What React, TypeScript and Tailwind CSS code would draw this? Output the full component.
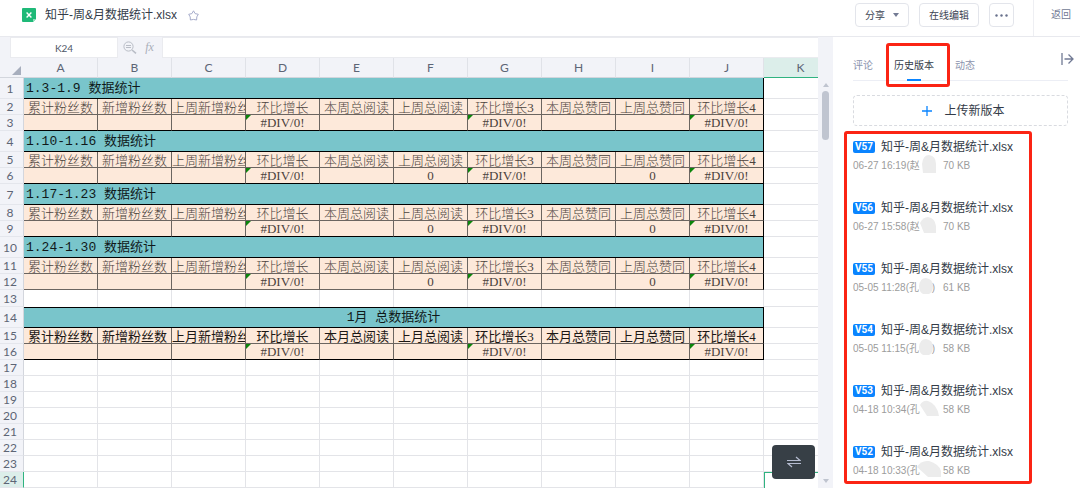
import React, { useState } from 'react'
import clsx from 'clsx'

const columns = ['A', 'B', 'C', 'D', 'E', 'F', 'G', 'H', 'I', 'J', 'K']

const weekLabels = ['累计粉丝数', '新增粉丝数', '上周新增粉丝', '环比增长', '本周总阅读', '上周总阅读', '环比增长3', '本周总赞同', '上周总赞同', '环比增长4']
const monthLabels = ['累计粉丝数', '新增粉丝数', '上月新增粉丝', '环比增长', '本月总阅读', '上月总阅读', '环比增长3', '本月总赞同', '上月总赞同', '环比增长4']
const firstValues = ['', '', '', '#DIV/0!', '', '', '#DIV/0!', '', '', '#DIV/0!']
const values = ['', '', '', '#DIV/0!', '', '0', '#DIV/0!', '', '0', '#DIV/0!']

type Row = {
  kind: 'title' | 'label' | 'value' | 'gap' | 'empty'
  title?: string
  cells?: string[]
  month?: boolean
  heavy?: boolean
}

const rows: Row[] = [
  { kind: 'title', title: '1.3-1.9 数据统计' },
  { kind: 'label', cells: weekLabels },
  { kind: 'value', cells: firstValues, heavy: true },
  { kind: 'title', title: '1.10-1.16 数据统计' },
  { kind: 'label', cells: weekLabels },
  { kind: 'value', cells: values, heavy: true },
  { kind: 'title', title: '1.17-1.23 数据统计' },
  { kind: 'label', cells: weekLabels },
  { kind: 'value', cells: values, heavy: true },
  { kind: 'title', title: '1.24-1.30 数据统计' },
  { kind: 'label', cells: weekLabels },
  { kind: 'value', cells: values },
  { kind: 'gap' },
  { kind: 'title', title: '1月 总数据统计', month: true },
  { kind: 'label', cells: monthLabels, month: true },
  { kind: 'value', cells: firstValues, month: true, heavy: true },
  ...Array.from({ length: 8 }, (): Row => ({ kind: 'empty' })),
]

const versions = [
  { id: 'V57', time: '06-27 16:19', name: '赵', size: '70 KB', blot: 'M1 10 Q2 1 8 1 Q15 2 15 10 V19 H2 Z' },
  { id: 'V56', time: '06-27 15:58', name: '赵', size: '70 KB', blot: 'M-1 8 Q2 2 7 2 Q14 3 15 11 V18 H3 Z' },
  { id: 'V55', time: '05-05 11:28', name: '孔', size: '61 KB', closed: true, blot: 'M-2 10 Q-1 2 5 2 Q12 3 12 10 Q12 16 8 18 H2 Q-2 16 -2 10 Z' },
  { id: 'V54', time: '05-05 11:15', name: '孔', size: '58 KB', closed: true, blot: 'M-2 10 Q-1 2 5 2 Q12 3 12 10 Q12 16 8 18 H2 Q-2 16 -2 10 Z' },
  { id: 'V53', time: '04-18 10:34', name: '孔', size: '58 KB', blot: 'M-1 7 Q2 2 7 3 Q16 6 18 18 H6 Z' },
  { id: 'V52', time: '04-18 10:33', name: '孔', size: '58 KB', blot: 'M-4 8 Q0 1 8 2 Q18 5 20 12 V18 H7 Z' },
]

const tabs = ['评论', '历史版本', '动态']

const sans = "font-['Liberation_Sans','Noto_Sans_CJK_SC',sans-serif]"
const lato = "font-['Lato','Noto_Sans_CJK_SC',sans-serif]"
const mono = "font-['Liberation_Mono','Noto_Sans_CJK_SC',monospace]"
const serif = "font-['Liberation_Serif','Noto_Sans_CJK_SC',serif]"

const TopBar = () => (
  <header className="flex h-[37px] shrink-0 items-start border-b border-[#e8e9ee] bg-white">
    <div className="flex h-[30px] min-w-0 flex-1 items-center pl-[22px]">
      <svg width="14" height="14" viewBox="0 0 14 14">
        <path d="M1 0h12a1 1 0 0 1 1 1v10l-3 3H1a1 1 0 0 1-1-1V1a1 1 0 0 1 1-1z" fill="#1fb978" />
        <path d="M14 11l-3 3v-3z" fill="#8fe0bd" />
        <path d="M4.600 4.600l4.800 4.800M9.400 4.600l-4.800 4.800" stroke="#fff" strokeWidth="1.4" />
      </svg>
      <h1 className="ml-[9px] truncate text-xs text-[#333b48]">知乎-周&amp;月数据统计.xlsx</h1>
      <button type="button" aria-label="收藏" className="ml-[11px]">
        <svg width="11" height="11" viewBox="0 0 11 11" fill="none" stroke="#a6accb" strokeWidth="1" strokeLinejoin="round">
          <path d="M5.5 .8L7.1 3.6 10.3 4.3 8.8 6.9 8.6 10 5.5 9.4 2.4 10 2.200 6.900 .7 4.3 3.9 3.6z" />
        </svg>
      </button>
    </div>
    <div className="flex h-[30px] items-center gap-[10px] pr-[19px] text-[10px] text-[#3b4352]">
      <button type="button" className="flex h-6 w-[54px] items-center justify-center gap-2 rounded-sm border border-[#e3e5eb]">
        分享
        <svg width="6" height="4" viewBox="0 0 6 4"><path d="M0 0h6L3 4z" fill="#737b94" /></svg>
      </button>
      <button type="button" className="h-6 w-[60px] rounded-sm border border-[#e3e5eb]">在线编辑</button>
      <button type="button" aria-label="更多" className="flex h-6 w-[25px] items-center justify-center rounded-sm border border-[#e3e5eb]">
        <svg width="13" height="3" viewBox="0 0 13 3" fill="#68718c">
          <circle cx="1.5" cy="1.5" r="1.2" />
          <circle cx="6.5" cy="1.5" r="1.2" />
          <circle cx="11.5" cy="1.5" r="1.2" />
        </svg>
      </button>
    </div>
    <a href="#" className="flex h-full w-[47px] items-center justify-end border-l border-[#eeeff3] pr-[9px] pb-2 text-[10px] text-[#717a94]">返回</a>
  </header>
)

const FormulaBar = () => (
  <div className="flex h-[21px] shrink-0 items-start">
    <input
      aria-label="名称框"
      defaultValue="K24"
      className={`${lato} ml-[10px] h-[21px] w-[108px] border border-[#eaebef] bg-white text-center text-[10px] text-[#505868] outline-none`}
    />
    <svg className="mt-1 ml-[5px]" width="14" height="13" viewBox="0 0 14 13" fill="none" stroke="#b9bdc6">
      <circle cx="5.5" cy="5.5" r="4.6" />
      <path d="M3 4.5h5M3 6.5h5" />
      <path d="M9 9l4 3.4" strokeWidth="1.6" />
    </svg>
    <span className={`${serif} w-[25px] text-center text-xs leading-5 text-[#a9aeb8] italic`}>fx</span>
    <input aria-label="公式" className="h-[21px] min-w-0 flex-1 border border-r-0 border-[#eaebef] bg-white px-2 text-xs outline-none" />
  </div>
)

const DataCell = ({ text, row, last }: { text: string, row: Row, last: boolean }) => {
  const isError = text.startsWith('#')
  return (
    <td
      className={clsx(
        'relative border-r border-b bg-[#fde9da] p-0 text-center text-[13px]',
        row.heavy ? 'border-b-black' : 'border-b-[#6b6560]',
        last ? 'border-r-black' : 'border-r-[#6b6560]',
      )}
    >
      {isError && (
        <svg className="absolute top-0 left-0" width="5" height="5" viewBox="0 0 5 5"><path d="M0 0h5L0 5z" fill="#0b850b" /></svg>
      )}
      <div
        className={clsx(
          'h-[15px] overflow-hidden whitespace-nowrap',
          row.kind === 'label' ? 'leading-[18px]' : 'leading-4',
          row.kind === 'label' && row.month ? 'font-normal text-[#1c1815]' : 'font-light text-[#4b423c]',
        )}
      >
        {text}
      </div>
    </td>
  )
}

const SheetRow = ({ row, index }: { row: Row, index: number }) => {
  const active = index === 24
  return (
    <tr className={clsx(row.kind === 'title' ? 'h-[21px]' : row.kind === 'gap' ? 'h-[17px]' : 'h-4')}>
      <th
        scope="row"
        className={clsx(
          lato,
          'border-r border-b border-b-[#e4e6ec] p-0 pr-[3px] text-center text-xs leading-[15px] font-normal text-[#5d6575]',
          active ? 'border-r-[#2fb380] bg-[#dceeea]' : 'border-r-[#d3d6dd] bg-[#f2f3f8]',
        )}
      >
        {index}
      </th>
      {row.kind === 'title' && (
        <td
          colSpan={10}
          className={clsx(
            mono,
            'border-r border-b border-black bg-[#79c5cb] p-0 px-[2px] text-[13px] font-normal text-[#10191a]',
            row.month && 'border-t text-center',
          )}
        >
          <div className={clsx('overflow-hidden', row.month ? 'h-[19px] leading-5' : 'h-5 leading-[22px]')}>{row.title}</div>
        </td>
      )}
      {row.cells && row.cells.map((text, i) => <DataCell key={i} text={text} row={row} last={i === 9} />)}
      {(row.kind === 'gap' || row.kind === 'empty') && columns.slice(0, 10).map((c) => (
        <td key={c} className={clsx('border-r border-[#e3e4e8] bg-white p-0', row.kind === 'empty' && 'border-b')}></td>
      ))}
      <td className={clsx('bg-white p-0', active ? 'border-t border-l border-[#2fb380]' : 'border-r border-b border-[#e3e4e8]')}></td>
    </tr>
  )
}

const Sheet = () => (
  <div className="relative min-h-0 flex-1 overflow-hidden">
    <table className={`${serif} w-[838px] min-w-full table-fixed border-separate border-spacing-0`}>
      <colgroup>
        <col className="w-6" />
        {columns.map((c) => <col key={c} />)}
      </colgroup>
      <thead>
        <tr className={`${lato} h-5 text-xs text-[#5d6575]`}>
          <td className="border-b border-[#d3d6dd] p-0 align-bottom">
            <svg className="mb-[2px] ml-3" width="9" height="9" viewBox="0 0 9 9"><path d="M9 0v9H0z" fill="#a7aebd" /></svg>
          </td>
          {columns.map((c) => (
            <th
              key={c}
              scope="col"
              className={clsx(
                'border-r border-b border-r-[#e0e2e8] p-0 leading-[19px] font-normal',
                c === 'K' ? 'border-b-[#2fb380] bg-[#dceeea]' : 'border-b-[#d3d6dd]',
              )}
            >
              {c}
            </th>
          ))}
        </tr>
      </thead>
      <tbody>
        {rows.map((row, i) => <SheetRow key={i} row={row} index={i + 1} />)}
      </tbody>
    </table>
    <button type="button" aria-label="切换" className="absolute right-[3px] bottom-[9px] flex h-[34px] w-[43px] items-center justify-center rounded-sm bg-[#373f46]">
      <svg width="14" height="12" viewBox="0 0 14 12" fill="none" stroke="#b5bcd0" strokeWidth="1.2">
        <path d="M0 4.5h13L9 1" />
        <path d="M14 7.5H1L5 11" />
      </svg>
    </button>
  </div>
)

const ScrollTrack = () => (
  <div className="flex w-[15px] shrink-0 flex-col items-center bg-[#f2f3f8] pt-[46px] pb-[5px]">
    <svg width="6" height="4" viewBox="0 0 6 4"><path d="M3 0l3 4H0z" fill="#bfc4cf" /></svg>
    <div className="mt-1 h-[49px] w-[7px] rounded-full bg-[#c0c5d0]"></div>
    <svg className="mt-auto" width="6" height="4" viewBox="0 0 6 4"><path d="M0 0h6L3 4z" fill="#bfc4cf" /></svg>
  </div>
)

const HistoryPanel = () => {
  const [current, setCurrent] = useState('历史版本')

  return (
    <aside className="flex w-[247px] shrink-0 flex-col bg-white">
      <div className="relative mr-3 ml-5 flex h-11 shrink-0 items-end gap-[21px] border-b border-[#eceef5]">
        {tabs.map((tab) => (
          <button
            key={tab}
            type="button"
            onClick={() => setCurrent(tab)}
            className={clsx('relative h-[30px] text-[10px]', current === tab ? 'text-[#333b48]' : 'text-[#8b93ad]')}
          >
            {tab}
            {current === tab && (
              <>
                <span className="absolute -bottom-px left-1/2 h-[2px] w-[14px] -translate-x-1/2 bg-[#0a84ff]"></span>
                <span className="absolute -top-[7px] -right-4 -bottom-[7px] -left-2 rounded-[3px] border-[3px] border-[#fb2414]"></span>
              </>
            )}
          </button>
        ))}
        <button type="button" aria-label="收起" className="absolute top-4 -right-[6px]">
          <svg width="13" height="12" viewBox="0 0 13 12" fill="none" stroke="#717a94" strokeWidth="1.3">
            <path d="M1 0v12M3.5 6H12M7.5 1.5L12 6l-4.500 4.500" />
          </svg>
        </button>
      </div>
      <button type="button" className="mt-[14px] mr-3 ml-5 flex h-[31px] shrink-0 items-center justify-center gap-3 rounded-sm border border-dashed border-[#d9dbe0] pl-[6px] text-xs text-[#333b48]">
        <svg width="10" height="10" viewBox="0 0 10 10" stroke="#0a84ff" strokeWidth="1.3"><path d="M5 0v10M0 5h10" /></svg>
        上传新版本
      </button>
      <ul className="mt-[5px] mr-12 ml-[11px] h-[353px] shrink-0 overflow-hidden rounded-[3px] border-[3px] border-[#fb2414] pt-1 pl-[6px]">
        {versions.map((v) => (
          <li key={v.id} className="h-[61px]">
            <div className="flex h-[18px] items-center">
              <span className="h-3 w-[22px] rounded-[2px] bg-[#0a84ff] text-center font-['Roboto',sans-serif] text-[10px] leading-3 font-bold text-white">{v.id}</span>
              <a href="#" className="ml-[6px] text-xs leading-[18px] whitespace-nowrap text-[#333b48]">知乎-周&amp;月数据统计.xlsx</a>
            </div>
            <div className="flex h-[18px] items-center text-[10px] whitespace-nowrap text-[#9c9c9c]">
              <span className="relative w-[90px]">
                {v.time}({v.name}
                {v.closed && <span className="absolute right-2">)</span>}
                <svg className="absolute -top-1 left-[68px] overflow-visible" width="20" height="20" viewBox="0 0 20 20">
                  <path d={v.blot} fill="#ececec" />
                </svg>
              </span>
              <span>{v.size}</span>
            </div>
          </li>
        ))}
      </ul>
    </aside>
  )
}

const App = () => {
  return (
    <div className={`${sans} flex h-screen flex-col overflow-hidden bg-white`}>
      <TopBar />
      <main className="flex min-h-0 flex-1">
        <section className="flex min-w-0 flex-1 flex-col bg-[#f2f3f8]">
          <FormulaBar />
          <Sheet />
        </section>
        <ScrollTrack />
        <HistoryPanel />
      </main>
    </div>
  )
}

export default App
